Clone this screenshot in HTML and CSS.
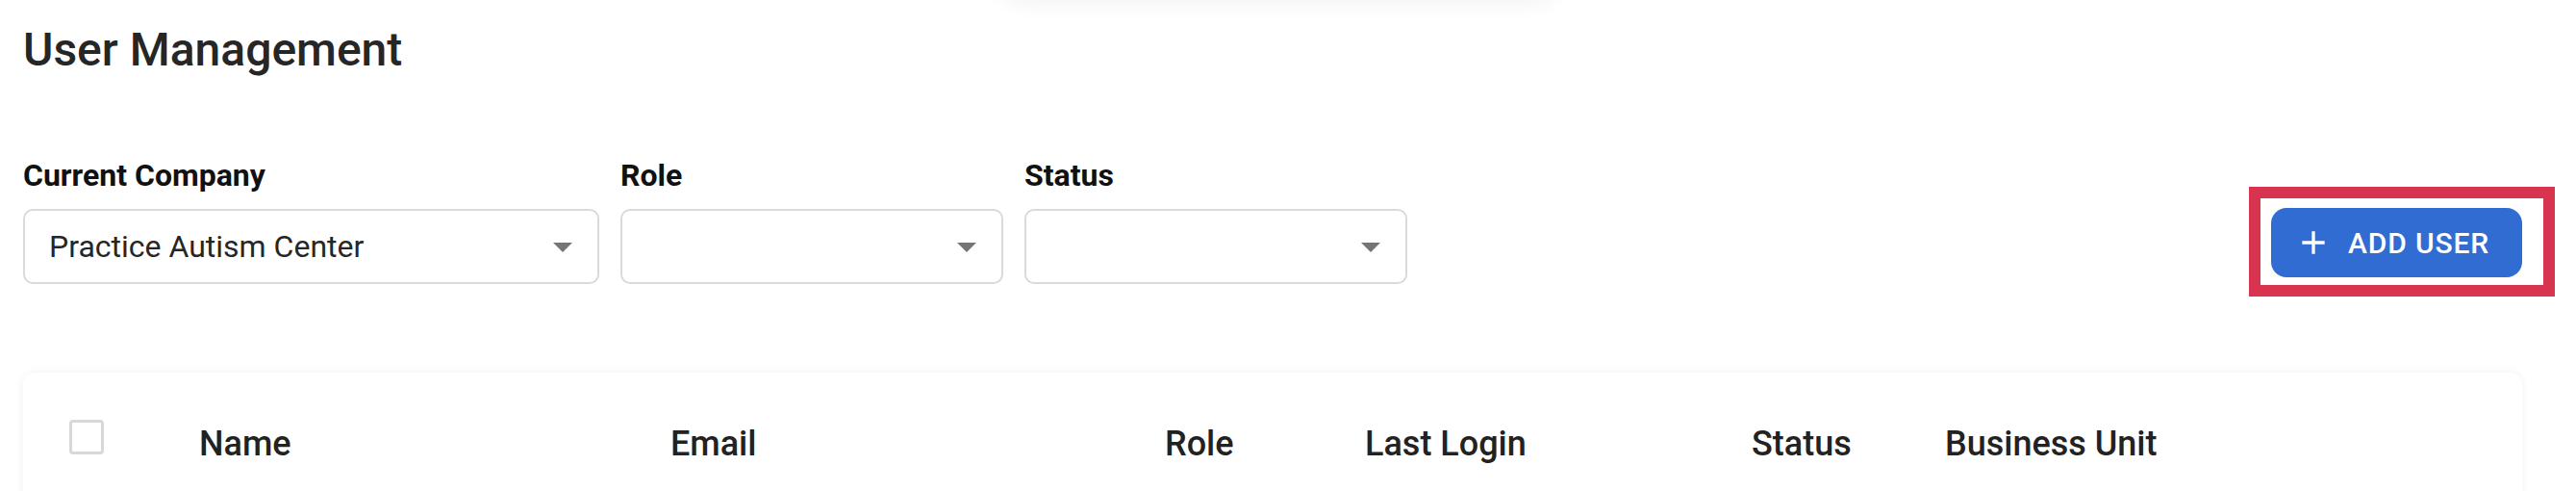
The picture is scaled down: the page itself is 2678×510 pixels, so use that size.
FILE: index.html
```html
<!DOCTYPE html>
<html lang="en">
<head>
<meta charset="utf-8">
<title>User Management</title>
<link rel="stylesheet" href="styles.css">
</head>
<body>
<div class="top-shadow"></div>
<main class="page">
  <h1 class="title">User Management</h1>

  <section class="toolbar">
    <div class="filters">
      <div class="field field-company">
        <label class="field-label">Current Company</label>
        <div class="select">
          <span class="select-value">Practice Autism Center</span>
          <svg class="select-arrow" viewBox="0 0 24 24" width="48" height="48"><path d="M7 10l5 5 5-5z"/></svg>
        </div>
      </div>
      <div class="field field-small">
        <label class="field-label">Role</label>
        <div class="select">
          <span class="select-value"></span>
          <svg class="select-arrow" viewBox="0 0 24 24" width="48" height="48"><path d="M7 10l5 5 5-5z"/></svg>
        </div>
      </div>
      <div class="field field-small">
        <label class="field-label">Status</label>
        <div class="select">
          <span class="select-value"></span>
          <svg class="select-arrow" viewBox="0 0 24 24" width="48" height="48"><path d="M7 10l5 5 5-5z"/></svg>
        </div>
      </div>
    </div>

    <div class="button-wrap">
      <button class="add-btn" type="button">
        <svg class="add-icon" viewBox="0 0 24 24" width="40" height="40"><path d="M19 13h-6v6h-2v-6H5v-2h6V5h2v6h6v2z"/></svg>
        <span>Add User</span>
      </button>
      <div class="highlight"></div>
    </div>
  </section>

  <section class="card">
    <div class="table-head">
      <div class="cell cell-check"><span class="checkbox"></span></div>
      <div class="cell">Name</div>
      <div class="cell">Email</div>
      <div class="cell">Role</div>
      <div class="cell">Last Login</div>
      <div class="cell">Status</div>
      <div class="cell">Business Unit</div>
    </div>
  </section>
</main>
</body>
</html>
```
FILE: styles.css
```css
* { box-sizing: border-box; }

html, body {
  margin: 0;
  padding: 0;
  background: #ffffff;
  font-family: Roboto, "Liberation Sans", Arial, sans-serif;
  overflow: hidden;
}

.top-shadow {
  position: absolute;
  left: 1030px;
  top: -60px;
  width: 600px;
  height: 60px;
  border-radius: 0 0 40px 40px;
  background: #ffffff;
  box-shadow: 0 4px 22px rgba(0, 0, 0, 0.05);
}

.page {
  padding: 23px 56px 0 24px;
}

.title {
  margin: 0;
  font-size: 48px;
  line-height: 58px;
  font-weight: 500;
  color: #262626;
}

.toolbar {
  margin-top: 85px;
  display: flex;
  justify-content: space-between;
  align-items: flex-end;
}

.filters {
  display: flex;
  gap: 22px;
  align-items: flex-end;
}

.field {
  display: flex;
  flex-direction: column;
}

.field-company { width: 599px; }
.field-small { width: 398px; }

.field-label {
  font-size: 32px;
  line-height: 32px;
  font-weight: 700;
  color: #111111;
  margin-bottom: 19px;
}

.select {
  position: relative;
  height: 78px;
  border: 2px solid #dadada;
  border-radius: 10px;
  display: flex;
  align-items: center;
  padding: 0 64px 0 25px;
}

.select-value {
  font-size: 32px;
  line-height: 38px;
  color: #262626;
}

.select-arrow {
  position: absolute;
  right: 12px;
  top: 50%;
  margin-top: -24px;
  fill: #757575;
}

.button-wrap {
  position: relative;
  margin-bottom: 7px;
}

.add-btn {
  display: flex;
  align-items: center;
  height: 72px;
  width: 261px;
  padding: 0 32px 0 24px;
  border: none;
  border-radius: 16px;
  background: #316cd3;
  color: #ffffff;
  font-family: Roboto, "Liberation Sans", Arial, sans-serif;
  font-size: 30px;
  font-weight: 500;
  letter-spacing: 0.85px;
  text-transform: uppercase;
  white-space: nowrap;
}

.add-icon {
  fill: #ffffff;
  margin-right: 16px;
  flex: none;
}

.highlight {
  position: absolute;
  left: -23px;
  top: -22px;
  width: 318px;
  height: 114px;
  border: 12px solid #d8334f;
  pointer-events: none;
}

.card {
  margin-top: 92px;
  min-height: 200px;
  background: #ffffff;
  border-radius: 12px;
  box-shadow: 0 0 10px rgba(0, 0, 0, 0.06);
}

.table-head {
  display: grid;
  grid-template-columns: 135px 490px 514px 208px 402px 201px 1fr;
  padding: 49px 0 0 48px;
  align-items: start;
}

.cell {
  font-size: 36px;
  line-height: 40px;
  font-weight: 500;
  color: #222222;
  margin-top: 5px;
  white-space: nowrap;
}

.cell-check { margin-top: 0; }

.checkbox {
  display: block;
  width: 36px;
  height: 36px;
  border: 3px solid #d8d8d8;
  border-radius: 4px;
}
```
